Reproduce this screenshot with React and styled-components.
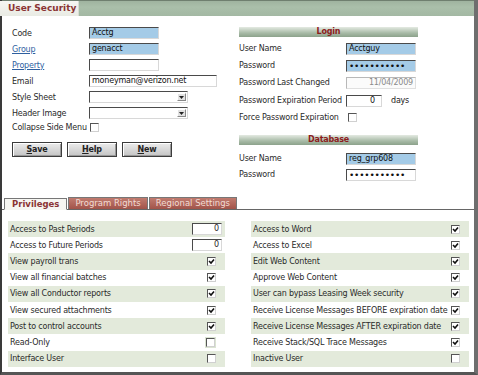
import React from "react";
import styled, { createGlobalStyle } from "styled-components";

const GlobalStyle = createGlobalStyle`
  html, body {
    margin: 0;
    padding: 0;
    background: #fff;
  }
  * {
    box-sizing: border-box;
  }
  body {
    font-family: "DejaVu Sans", Verdana, sans-serif;
    font-size: 8px;
    letter-spacing: -0.2px;
    color: #222;
  }
`;

const privLeft = [
  { label: "Access to Past Periods", num: "0" },
  { label: "Access to Future Periods", num: "0" },
  { label: "View payroll trans", checked: true },
  { label: "View all financial batches", checked: true },
  { label: "View all Conductor reports", checked: true },
  { label: "View secured attachments", checked: true },
  { label: "Post to control accounts", checked: true },
  { label: "Read-Only", checked: false, framed: true },
  { label: "Interface User", checked: false },
];

const privRight = [
  { label: "Access to Word", checked: true },
  { label: "Access to Excel", checked: true },
  { label: "Edit Web Content", checked: true },
  { label: "Approve Web Content", checked: true },
  { label: "User can bypass Leasing Week security", checked: true },
  { label: "Receive License Messages BEFORE expiration date", checked: true },
  { label: "Receive License Messages AFTER expiration date", checked: true },
  { label: "Receive Stack/SQL Trace Messages", checked: true },
  { label: "Inactive User", checked: false },
];

function Check({ checked, framed }) {
  return (
    <CheckFrame $framed={framed}>
      <CheckBox>
        {checked && (
          <svg width="7" height="7" viewBox="0 0 7 7">
            <path d="M1 3 L3 5 L6 1.5" stroke="#111" strokeWidth="1.6" fill="none" />
          </svg>
        )}
      </CheckBox>
    </CheckFrame>
  );
}

function Select() {
  return (
    <SelectBox>
      <SelectArrow>
        <svg width="5" height="3" viewBox="0 0 5 3">
          <path d="M0 0 H5 L2.5 3 Z" fill="#222" />
        </svg>
      </SelectArrow>
    </SelectBox>
  );
}

function PrivColumn({ rows }) {
  return (
    <PrivList>
      {rows.map((r, i) => (
        <PrivRow key={r.label} $shade={i % 2 === 0}>
          <span>{r.label}</span>
          {r.num !== undefined ? (
            <NumInput>{r.num}</NumInput>
          ) : (
            <Check checked={r.checked} framed={r.framed} />
          )}
        </PrivRow>
      ))}
    </PrivList>
  );
}

export default function App() {
  return (
    <>
      <GlobalStyle />
      <Frame>
        <Header>
          <HeaderTab>User Security</HeaderTab>
        </Header>
        <TopPanel>
          <LeftCol>
            <FormGrid>
              <Label>Code</Label>
              <Field $blue>Acctg</Field>
              <LinkLabel>Group</LinkLabel>
              <Field $blue>genacct</Field>
              <LinkLabel>Property</LinkLabel>
              <Field />
              <Label>Email</Label>
              <Field $w={128}>moneyman@verizon.net</Field>
              <Label>Style Sheet</Label>
              <Select />
              <Label>Header Image</Label>
              <Select />
              <InlineRow>
                <Label>Collapse Side Menu</Label>
                <Check />
              </InlineRow>
            </FormGrid>
            <Buttons>
              <Button><u>S</u>ave</Button>
              <Button><u>H</u>elp</Button>
              <Button><u>N</u>ew</Button>
            </Buttons>
          </LeftCol>
          <RightCol>
            <SectionBar>Login</SectionBar>
            <LoginGrid>
              <Label>User Name</Label>
              <Field $blue>Acctguy</Field>
              <Label>Password</Label>
              <Field $blue $dots>•••••••••••</Field>
              <Label>Password Last Changed</Label>
              <Field $disabled>11/04/2009</Field>
              <Label>Password Expiration Period</Label>
              <Inline>
                <Field $w={36} $right>0</Field>
                <Days>days</Days>
              </Inline>
              <Label>Force Password Expiration</Label>
              <Inline $pad={2}>
                <Check />
              </Inline>
            </LoginGrid>
            <SectionBar $gap={10}>Database</SectionBar>
            <DbGrid>
              <Label>User Name</Label>
              <Field $blue>reg_grp608</Field>
              <Label>Password</Label>
              <Field $dots>•••••••••••</Field>
            </DbGrid>
          </RightCol>
        </TopPanel>
        <TabRow>
          <Tab $active>Privileges</Tab>
          <Tab>Program Rights</Tab>
          <Tab>Regional Settings</Tab>
        </TabRow>
        <PrivPanel>
          <PrivColumn rows={privLeft} />
          <PrivColumn rows={privRight} />
        </PrivPanel>
      </Frame>
    </>
  );
}

const Frame = styled.div`
  width: 478px;
  height: 375px;
  border-left: 2px solid #3a3a3a;
  border-right: 4px solid #6e6e6e;
  border-bottom: 3px solid #555;
  display: flex;
  flex-direction: column;
  background: #fff;
`;

const Header = styled.div`
  height: 16px;
  display: flex;
  background: linear-gradient(#9fb39f, #aabfaa 40%, #a3b8a3);
  border-top: 1px solid #6f7f6f;
`;

const HeaderTab = styled.div`
  width: 79px;
  margin-left: -2px;
  background: linear-gradient(#f6f6f2, #e9ebe4);
  border-right: 1px solid #d8dcd2;
  color: #8a3434;
  font-weight: bold;
  font-size: 9px;
  letter-spacing: 0;
  padding: 2px 0 0 8px;
`;

const TopPanel = styled.div`
  height: 181px;
  display: flex;
  padding: 9px 0 0 10px;
`;

const LeftCol = styled.div`
  width: 227px;
`;

const FormGrid = styled.div`
  display: grid;
  grid-template-columns: 77px auto;
  grid-template-rows: repeat(6, 16px) 12px;
  align-items: center;
  justify-items: start;
`;

const Label = styled.span`
  white-space: nowrap;
  color: #2a2a2a;
`;

const LinkLabel = styled(Label)`
  color: #2f5f9f;
  text-decoration: underline;
`;

const Field = styled.div`
  width: ${(p) => p.$w || 70}px;
  height: 12px;
  border-top: 1px solid #4a4a4a;
  border-left: 1px solid #4a4a4a;
  border-right: 1px solid #d8d8d8;
  border-bottom: 1px solid #d8d8d8;
  background: ${(p) => (p.$blue ? "#a4cbe7" : p.$disabled ? "#fbfbfb" : "#fff")};
  color: ${(p) => (p.$disabled ? "#8a8a8a" : "#111")};
  text-align: ${(p) => (p.$disabled || p.$right ? "right" : "left")};
  padding: 0 ${(p) => (p.$right ? 6 : 2)}px 0 2px;
  line-height: 10px;
  font-size: ${(p) => (p.$dots ? "9px" : "8px")};
  white-space: nowrap;
  overflow: hidden;
  ${(p) => p.$disabled && "border-color: #b8b8b8 #e0e0e0 #e0e0e0 #b8b8b8;"}
`;

const SelectBox = styled.div`
  width: 99px;
  height: 12px;
  border-top: 1px solid #4a4a4a;
  border-left: 1px solid #4a4a4a;
  border-right: 1px solid #d8d8d8;
  border-bottom: 1px solid #d8d8d8;
  background: #fff;
  display: flex;
  justify-content: flex-end;
  padding: 1px;
`;

const SelectArrow = styled.div`
  width: 9px;
  background: #e2e2e2;
  border: 1px solid;
  border-color: #fff #888 #888 #fff;
  display: flex;
  align-items: center;
  justify-content: center;
`;

const InlineRow = styled.div`
  grid-column: 1 / -1;
  display: flex;
  align-items: center;
  gap: 3px;
`;

const CheckFrame = styled.div`
  display: inline-flex;
  padding: ${(p) => (p.$framed ? "1px" : "0")};
  background: ${(p) => (p.$framed ? "#dbe4d2" : "transparent")};
`;

const CheckBox = styled.div`
  width: 9px;
  height: 9px;
  background: #fff;
  border-top: 1px solid #555;
  border-left: 1px solid #555;
  border-right: 1px solid #d0d0d0;
  border-bottom: 1px solid #d0d0d0;
  display: flex;
  align-items: center;
  justify-content: center;
`;

const Buttons = styled.div`
  display: flex;
  gap: 5px;
  margin-top: 9px;
`;

const Button = styled.button`
  width: 50px;
  height: 15px;
  padding: 0;
  font-family: inherit;
  font-size: 8px;
  letter-spacing: -0.2px;
  font-weight: bold;
  color: #222;
  background: linear-gradient(#ececec, #c4c4c4);
  border: 1px solid #3c3c3c;
  box-shadow: inset 1px 1px 0 #fff, inset -1px -1px 0 #999;
`;

const RightCol = styled.div`
  width: 179px;
  padding-top: 2px;
`;

const SectionBar = styled.div`
  height: 10px;
  margin-top: ${(p) => p.$gap || 0}px;
  background: linear-gradient(#e4eae2, #a7baa6 60%, #8ca28b);
  color: #8c1c1c;
  font-weight: bold;
  font-size: 8px;
  line-height: 10px;
  text-align: center;
`;

const LoginGrid = styled.div`
  margin-top: 3px;
  display: grid;
  grid-template-columns: 107px auto;
  grid-template-rows: 17px 17px 17px 19px 15px;
  align-items: center;
  justify-items: start;
`;

const DbGrid = styled(LoginGrid)`
  margin-top: 5px;
  grid-template-rows: 17px 15px;
`;

const Inline = styled.div`
  display: flex;
  align-items: center;
  padding-left: ${(p) => p.$pad || 0}px;
`;

const Days = styled.span`
  margin-left: 9px;
`;

const TabRow = styled.div`
  height: 13px;
  display: flex;
  align-items: flex-end;
  padding-left: 2px;
  border-bottom: 1px solid #666;
`;

const Tab = styled.div`
  height: 12px;
  padding: 0 ${(p) => (p.$active ? 7 : 6)}px;
  margin-bottom: ${(p) => (p.$active ? -1 : 0)}px;
  font-size: 8.5px;
  letter-spacing: 0;
  line-height: 11px;
  white-space: nowrap;
  font-weight: ${(p) => (p.$active ? "bold" : "normal")};
  color: ${(p) => (p.$active ? "#8a3434" : "#f2dcd4")};
  background: ${(p) =>
    p.$active ? "#f6f6f2" : "linear-gradient(#c07a6e, #a2544a)"};
  border: 1px solid #777;
  border-bottom: ${(p) => (p.$active ? "1px solid #f6f6f2" : "none")};
  margin-right: 1px;
`;

const PrivPanel = styled.div`
  flex: 1;
  display: grid;
  grid-template-columns: 217px 218px;
  column-gap: 26px;
  padding: 11px 0 0 6px;
`;

const PrivList = styled.div`
  display: flex;
  flex-direction: column;
`;

const PrivRow = styled.div`
  height: 16.2px;
  display: flex;
  align-items: center;
  justify-content: space-between;
  padding: 0 9px 0 2px;
  background: ${(p) => (p.$shade ? "#e3eadb" : "transparent")};
  white-space: nowrap;
  color: #2a2a2a;
`;

const NumInput = styled.div`
  width: 30px;
  height: 12px;
  margin-right: -6px;
  border-top: 1px solid #4a4a4a;
  border-left: 1px solid #4a4a4a;
  border-right: 1px solid #d8d8d8;
  border-bottom: 1px solid #d8d8d8;
  background: #fff;
  text-align: right;
  padding-right: 2px;
  line-height: 10px;
`;
